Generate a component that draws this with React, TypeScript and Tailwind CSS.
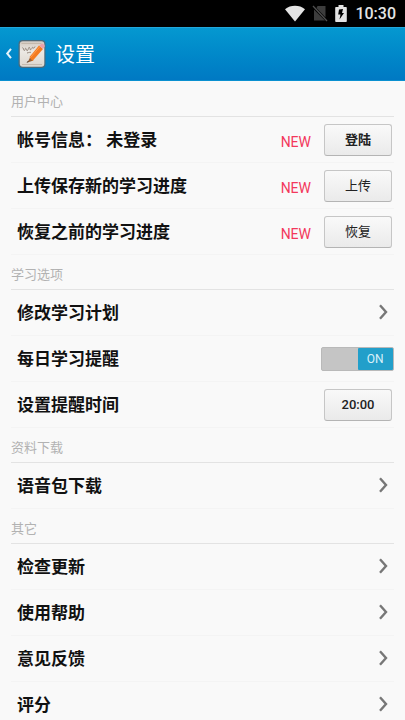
import { useState, type ReactNode } from 'react'

const outlineButton =
  'h-8 w-[68px] rounded-[3px] border border-[#c6c6c6] border-b-[#b4b4b4] bg-gradient-to-b from-[#f9f9f9] to-[#eaeaea] text-[13px] leading-none text-[#222]'

const otherLinks = [
  { label: '检查更新', href: '#update' },
  { label: '使用帮助', href: '#help' },
  { label: '意见反馈', href: '#feedback' },
  { label: '评分', href: '#rate' },
]

function StatusBar() {
  return (
    <div className="flex h-[27px] shrink-0 items-center justify-end bg-black pr-[9px] text-[#e4e4e4]">
      <svg width="20" height="17" viewBox="0 0 20 17" fill="currentColor" className="mr-[7px]">
        <path d="M0 4.2C5.5-.4 14.500-.4 20 4.2L10 16.500z" />
      </svg>
      <svg width="16" height="17" viewBox="0 0 16 17" className="mr-[7px]">
        <path d="M5.500 1H13.500v11.500L4.500 3z" fill="#3d3d3d" />
        <path d="M2 4.500V15.500h11z" fill="#3d3d3d" />
        <path d="M1 1l14 15" stroke="#505050" strokeWidth="1.300" />
      </svg>
      <svg width="12" height="17" viewBox="0 0 12 17" className="mr-2">
        <path d="M3.500 0h5v2H11a.8.8 0 0 1 .8.8v13.400a.8.8 0 0 1-.8.8H1a.8.8 0 0 1-.8-.8V2.800A.8.8 0 0 1 1 2h2.500z" fill="currentColor" />
        <path d="M8 4L4 4.500 3.200 9.500h2.300L4.500 14.500 9 8H7z" fill="#000" />
      </svg>
      <span className="text-base font-medium leading-none">10:30</span>
    </div>
  )
}

function AppIcon() {
  return (
    <svg width="28" height="30" viewBox="0 0 28 30">
      <defs>
        <linearGradient id="paper" x1="0" y1="0" x2="0" y2="1">
          <stop offset="0" stopColor="#d3c9bf" />
          <stop offset="0.4" stopColor="#ece9e4" />
          <stop offset="1" stopColor="#ddd6ce" />
        </linearGradient>
      </defs>
      <rect x="0.500" y="1" width="27" height="28" rx="4" fill="#4b6b7c" />
      <rect x="1.800" y="2.300" width="24.500" height="25.500" rx="3" fill="url(#paper)" />
      <path d="M3.500 4.500h20M4 25.500h20" stroke="#bfb3a5" strokeWidth="0.800" />
      <path
        d="M4.500 8.500c1 0 1 3.500 2 3s.5-3 1.500-2 .5 3 1.500 2 1-4 2-3 0 3 1.500 2 1-3 2-2 1 1 2-1M9 14c2-.5 3-1 4-.5"
        fill="none"
        stroke="#94867a"
        strokeWidth="1"
      />
      <path d="M9.500 23.500l2.500-5 3.500 3z" fill="#9a6236" />
      <path d="M11.500 18L21 6.500l4 3.500-10.500 12z" fill="#f47b20" />
      <path d="M12.500 18.500L22 7.500" stroke="#ff9d4d" strokeWidth="1" />
      <path d="M21.200 6.500l2-1.500a1.500 1.500 0 0 1 2.200 0l1 1a1.500 1.500 0 0 1 0 2L25 10z" fill="#e9a2ac" />
      <path d="M8.500 24l1.200-2 1.300.8z" fill="#473529" />
    </svg>
  )
}

function Header() {
  return (
    <header className="flex h-[54px] shrink-0 items-center border-t border-b border-t-[#22a7da] border-b-[#0a90d0] bg-gradient-to-b from-[#0598d0] to-[#0079c3] pl-[5px] text-white">
      <a href="#back" aria-label="返回" className="flex items-center">
        <svg width="8" height="12" viewBox="0 0 8 12" fill="none" stroke="#e4f3fb" strokeWidth="2">
          <path d="M6 .8L2.200 5.500 6 10.200" />
        </svg>
        <span className="ml-[5px]">
          <AppIcon />
        </span>
      </a>
      <h1 className="mt-px ml-[9px] text-xl leading-none">设置</h1>
    </header>
  )
}

function Section({ title, children }: { title: string; children: ReactNode }) {
  return (
    <section>
      <h2 className="flex h-[35px] items-end border-b border-[#e3e3e3] pb-[5px] text-[13px] leading-[18px] text-[#b2b2b2]">
        {title}
      </h2>
      <ul>{children}</ul>
    </section>
  )
}

const rowBase = 'flex h-[46px] items-center border-b border-[#f4f4f4] pl-[6px]'
const rowLabel = 'flex-1 text-[17px] font-bold leading-6 text-[#111]'

function ActionRow({ id, label, action, strong }: { id: string; label: string; action: string; strong?: boolean }) {
  return (
    <li className={`${rowBase} pr-[2px]`}>
      <span id={id} className={`${rowLabel} whitespace-pre`}>{label}</span>
      <span className="mt-1 mr-[13px] text-sm leading-none text-[#f3385c]">NEW</span>
      <button type="button" aria-describedby={id} className={`${outlineButton} ${strong ? 'font-bold' : ''}`}>
        {action}
      </button>
    </li>
  )
}

function LinkRow({ label, href }: { label: string; href: string }) {
  return (
    <li>
      <a href={href} className={`${rowBase} pr-[6px]`}>
        <span className={rowLabel}>{label}</span>
        <svg width="10" height="17" viewBox="0 0 10 17" fill="none" stroke="#777" strokeWidth="2.400">
          <path d="M2 1.300L8 8l-6 6.700" />
        </svg>
      </a>
    </li>
  )
}

export default function App() {
  const [reminder, setReminder] = useState(true)

  return (
    <div className="flex h-dvh flex-col overflow-hidden bg-[#f9f9f9] font-[Roboto,'Noto_Sans_CJK_SC',sans-serif]">
      <StatusBar />
      <Header />
      <main className="flex-1 overflow-y-auto px-[11px] pt-px [scrollbar-width:none]">
        <Section title="用户中心">
          <ActionRow id="account" label="帐号信息： 未登录" action="登陆" strong />
          <ActionRow id="upload" label="上传保存新的学习进度" action="上传" />
          <ActionRow id="restore" label="恢复之前的学习进度" action="恢复" />
        </Section>

        <Section title="学习选项">
          <LinkRow label="修改学习计划" href="#plan" />
          <li className={rowBase}>
            <label htmlFor="reminder" className={rowLabel}>每日学习提醒</label>
            <span className="relative flex h-6 w-[73px] rounded-[2px] border border-[#b9b9b9] bg-[#c5c5c5]">
              <input
                id="reminder"
                type="checkbox"
                role="switch"
                checked={reminder}
                onChange={(e) => setReminder(e.target.checked)}
                className="absolute inset-0 cursor-pointer opacity-0"
              />
              <span
                className={`flex w-1/2 items-center justify-center rounded-[1px] text-xs text-[#d9f1fa] ${
                  reminder ? 'ml-auto bg-[#229fca]' : 'bg-[#999]'
                }`}
              >
                {reminder ? 'ON' : 'OFF'}
              </span>
            </span>
          </li>
          <li className={`${rowBase} pr-[2px]`}>
            <span id="remind-time" className={rowLabel}>设置提醒时间</span>
            <button type="button" aria-describedby="remind-time" className={`${outlineButton} font-medium`}>
              20:00
            </button>
          </li>
        </Section>

        <Section title="资料下载">
          <LinkRow label="语音包下载" href="#voice" />
        </Section>

        <Section title="其它">
          {otherLinks.map((link) => (
            <LinkRow key={link.href} label={link.label} href={link.href} />
          ))}
        </Section>
      </main>
    </div>
  )
}
